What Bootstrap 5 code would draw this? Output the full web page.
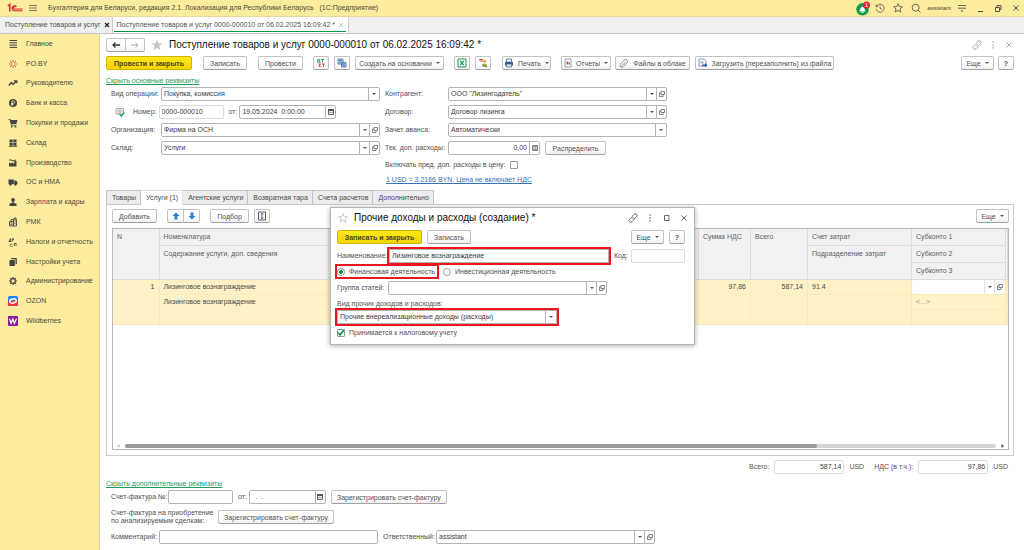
<!DOCTYPE html>
<html lang="ru">
<head>
<meta charset="utf-8">
<meta name="viewport" content="width=device-width, initial-scale=1">
<title>Поступление товаров и услуг</title>
<link href="https://cdn.jsdelivr.net/npm/bootstrap@5.3.0/dist/css/bootstrap.min.css" rel="stylesheet">
<style>
:root{--edge:#b4b4b4;--soft:#dedede;--yellow:#fbec9e;--green:#009646}
body{font:7px/10px "Liberation Sans",Arial,sans-serif;color:#505050;background:#fff;min-height:100vh}
svg{display:block;flex:none}
.ico{width:10px;height:10px}
a{color:inherit}
label{white-space:nowrap}
.topbar{background:var(--yellow);height:17px;border-bottom:1px solid #e4d9a0;padding:0 3px 0 7px;color:#4d4a3c}
.topbar .btn,.plain{padding:0;border:0;line-height:1;font-size:7px;color:inherit;background:none}
.user-name{font-size:6px;margin:0 -2px}
.tabbar{background:#f0f0f0;height:17px;border-bottom:1px solid #c4c4c4}
.wintab{padding:0 1px 0 5px;gap:2px;border-right:1px solid #cfcfcf;text-decoration:none;height:16px}
.wintab.current{background:#fff;position:relative;padding:0 3px 0 4px}
.wintab.current::after{content:"";position:absolute;left:1px;right:2px;bottom:1px;height:1px;background:var(--green)}
.sidebar{width:100px;background:var(--yellow);border-right:1px solid #ddd5a6}
.sections{height:297px}
.sections a{display:flex;align-items:center;gap:8px;padding-left:8px;text-decoration:none;flex:1;color:#4f4a38}
.workspace{padding:4px 10px 4px 6px;min-width:0}
.cmd{--bs-btn-color:#505050;--bs-btn-hover-color:#333;--bs-btn-hover-bg:#eee;--bs-btn-hover-border-color:#aaa;height:14px;padding:0 10px;font-size:7px;line-height:11px;border:1px solid #c2c2c2;border-bottom-color:#a2a2a2;border-radius:2px;background:linear-gradient(#fff 50%,#f0f0f0);display:inline-flex;align-items:center;justify-content:center;gap:4px;white-space:nowrap;flex:none}
.cmd.main-cmd{background:linear-gradient(#ffe81c,#f3d500);border-color:#d0b300;color:#4a4525;font-weight:bold;padding:0 7px}
.cmd.icon-cmd{width:16px;padding:0}
.cmd.more{width:33px;padding:0}
.caret{width:0;height:0;border:2px solid transparent;border-top-color:#555;border-bottom:0}
h1,h2{font-size:10px;line-height:14px;font-weight:400;color:#111;margin:0;white-space:nowrap}
.form-control,.form-select{height:14px;min-height:0;padding:0 2px 1px;font-size:7px;line-height:10px;color:#3c3c3c;border:1px solid var(--edge);border-radius:2px;background-color:#fff}
.form-select{line-height:12px;background-image:linear-gradient(var(--edge),var(--edge)),url("data:image/svg+xml,%3Csvg xmlns='http://www.w3.org/2000/svg' viewBox='0 0 4 2'%3E%3Cpath d='M0 0h4L2 2z' fill='%23555'/%3E%3C/svg%3E");background-size:1px 100%,4px 2px;background-position:right 10px center,right 3px center;padding:0 12px 0 2px}
.input-group{height:14px;flex-wrap:nowrap}
.input-group .btn{height:14px;width:11px;padding:0;border:1px solid var(--edge);border-radius:2px;display:flex;align-items:center;justify-content:center;background:#fff}
.mid{width:219px}
.readonly{border-color:var(--soft)}
.caption{width:50px;flex:none}
.caption2{width:63px;flex:none}
.toggle-link{color:#1f9d5c;line-height:10px}
.form-check-input{width:8px;height:8px;margin:0;border:1px solid #a0a0a0;float:none;flex:none}
.form-check-input[type=checkbox]{border-radius:1px}
.form-check-input:checked{background-color:#fff;border-color:#999}
.form-check-input:checked[type=radio]{background-image:radial-gradient(circle,var(--green) 0 2px,transparent 2px)}
.form-check-input:checked[type=checkbox]{background-size:8px 8px;background-image:url("data:image/svg+xml,%3Csvg xmlns='http://www.w3.org/2000/svg' viewBox='0 0 8 8'%3E%3Cpath d='M1 3.5 3 6l4-5' fill='none' stroke='%23009646' stroke-width='1.7'/%3E%3C/svg%3E")}
.pages{border:0;padding-left:0}
.pages .nav-link{height:14px;padding:0 4px 0 5px;line-height:13px;background:#ececec;border:1px solid #c4c4c4;border-left-width:0;border-bottom:0;border-radius:0;color:#4a4a4a;margin:0}
.pages .nav-item:first-child .nav-link{border-left-width:1px}
.pages .nav-link.active{background:#fff;margin-bottom:-1px;height:15px;color:#4a4a4a;position:relative}
.page-body{border:1px solid #ccc;padding:4px 4px 5px 5px}
.grid-box{border:1px solid #b8b8b8;height:222px;margin-top:5px}
.lines{table-layout:fixed;width:100%;border-collapse:collapse;color:#4a4a4a}
.lines th,.lines td{height:15px;padding:0 4px;font-weight:400;vertical-align:middle;border:1px solid #f8e9b8}
.lines th{height:17px;background:#f1f1f1;border-color:#dcdcdc;color:#606060;vertical-align:top;padding-top:3px}
.lines thead tr:first-child th{border-top:0;height:16px}
.lines td{background:#fff1c6}
.lines tr>:first-child{border-left:0}
.lines .num{text-align:right;padding-right:4px}
.lines td.top{vertical-align:top;padding-top:2px}
.track{height:4px;background:#d4d4d4;border-radius:2px}
.thumb{height:4px;background:#989898;border-radius:2px}
.dialog{position:absolute;left:230px;top:173px;width:365px;height:138px;border:1px solid #b5b5b5;background:#fff;box-shadow:0 1px 5px #0005;padding:3px 9px 0 6px;z-index:5}
.marked{outline:2px solid #e8191f;border-radius:0}
</style>
</head>
<body class="d-flex flex-column">
<svg width="0" height="0" class="position-absolute">
<symbol id="open" viewBox="0 0 8 8"><path d="M3 1.500h3.500v3H3zM3 3H1.500v3.500H5V4.500" fill="none" stroke="#666" stroke-width=".8"/></symbol>
<symbol id="cal" viewBox="0 0 8 8"><path d="M1.500 1.500h5v5h-5z" fill="#eee" stroke="#555" stroke-width=".9"/><path d="M1 1h6v2H1z" fill="#555"/><path d="M2 4.500h4" stroke="#888" stroke-width=".6"/></symbol>
<symbol id="calc" viewBox="0 0 8 8"><path d="M1.500 1.500h5v5h-5z" fill="#ddd" stroke="#666" stroke-width=".8"/><path d="M2 2.500h4M2.500 4.200h3M2.500 5.500h3" stroke="#777" stroke-width=".7"/></symbol>
<symbol id="chain" viewBox="0 0 10 10"><g fill="none" stroke="currentColor" stroke-width=".9"><path d="M4.500 2.800 6 1.300a1.700 1.700 0 0 1 2.500 2.500L6.700 5.600a1.600 1.600 0 0 1-2.300 0"/><path d="M5.500 7.200 4 8.700a1.700 1.700 0 0 1-2.500-2.500l1.800-1.800a1.600 1.600 0 0 1 2.300 0"/></g></symbol>
<symbol id="dots" viewBox="0 0 10 10"><path d="M4.400 1.500h1.300v1.300H4.400zM4.400 4.400h1.300v1.300H4.400zM4.400 7.300h1.300v1.300H4.400z" fill="currentColor"/></symbol>
<symbol id="cross" viewBox="0 0 10 10"><path d="m2.500 2.500 5 5m0-5-5 5" stroke="currentColor" stroke-width=".9"/></symbol>
<symbol id="star" viewBox="0 0 12 12"><path d="m6 .8 1.500 3.500 3.800.3-2.900 2.500.9 3.800L6 8.900l-3.300 2 .9-3.800L.7 4.600l3.800-.3z"/></symbol>
</svg>

<header class="topbar d-flex align-items-center">
  <svg width="16" height="10" viewBox="0 0 16 10" fill="none" stroke="#d8262c"><path d="m.8 3 2-1.500V8.500" stroke-width="1.500"/><path d="M9.500 3.700A2.500 2.500 0 1 0 7.200 7.700H15.500M8.300 4.300A1.100 1.100 0 1 0 7.200 6H15.500" stroke-width="1.100"/></svg>
  <button class="btn" style="margin-left:5px" aria-label="Меню"><svg width="10" height="10" viewBox="0 0 10 10" stroke="#6b6650"><path d="M1 2.500h8M1 5h8M1 7.500h8" stroke-width=".9"/></svg></button>
  <span class="text-nowrap" style="margin-left:10px">Бухгалтерия для Беларуси, редакция 2.1. Локализация для Республики Беларусь &nbsp; (1С:Предприятие)</span>
  <div class="d-flex align-items-center gap-2 ms-auto">
    <button class="btn" style="margin-right:-3px" aria-label="Уведомления"><svg width="14" height="15" viewBox="0 0 14 15"><circle cx="6.500" cy="8.300" r="6.200" fill="#0a9a4a"/><path d="M3 10.500c1.500-1 1-4 3.500-5 2.500 1 2 4 3.500 5zM5.500 11h2v1h-2z" fill="#fff"/><circle cx="10.500" cy="4" r="3.500" fill="#e6262b"/><text x="9" y="6.300" font-size="6" fill="#fff">1</text></svg></button>
    <button class="btn" aria-label="История"><svg class="ico" viewBox="0 0 10 10" fill="none" stroke="#555" stroke-width=".8"><path d="M1.500 3.500a4 4 0 1 1-.3 2.500M1 1.500v2.200h2.200M5 2.800V5.300l2 1"/></svg></button>
    <button class="btn" aria-label="Избранное"><svg class="ico" fill="none" stroke="#555"><use href="#star"/></svg></button>
    <button class="btn" aria-label="Поиск"><svg class="ico" viewBox="0 0 10 10" fill="none" stroke="#555" stroke-width=".9"><circle cx="4.700" cy="4.700" r="3.500"/><path d="m7.200 7.200 2.300 2.300"/></svg></button>
    <span class="user-name">assistant</span>
    <button class="btn" aria-label="Настройки"><svg class="ico" viewBox="0 0 10 10" stroke="#555" stroke-width=".9"><path d="M1 2.500h8M1 5.200h8"/><path d="M3.500 7.500h3L5 9z" fill="#555" stroke="none"/></svg></button>
    <button class="btn" aria-label="Свернуть"><svg class="ico" viewBox="0 0 10 10" stroke="#444"><path d="M3 8.500h5"/></svg></button>
    <button class="btn" aria-label="Окно"><svg class="ico" viewBox="0 0 10 10" fill="none" stroke="#444" stroke-width=".9"><path d="M2.500 4.500h4v4h-4zM4 4.500V2.500h4v4H6.500"/></svg></button>
    <button class="btn" aria-label="Закрыть"><svg class="ico" viewBox="0 0 10 10" stroke="#444" stroke-width=".9"><path d="m2.500 2.500 5 5m0-5-5 5"/></svg></button>
  </div>
</header>

<nav class="tabbar d-flex">
  <a href="#" class="wintab d-flex align-items-center">Поступление товаров и услуг <svg width="8" height="8" viewBox="0 0 10 10"><path d="m2.500 2.500 5 5m0-5-5 5" stroke="#222" stroke-width="1.500"/></svg></a>
  <a href="#" class="wintab current d-flex align-items-center">Поступление товаров и услуг 0000-000010 от 06.02.2025 16:09:42 * <svg width="8" height="8" color="#aaa"><use href="#cross"/></svg></a>
</nav>

<div class="d-flex flex-grow-1">
<aside class="sidebar flex-shrink-0">
<nav class="sections d-flex flex-column" aria-label="Разделы">
  <a href="#"><svg class="ico" viewBox="0 0 10 10" stroke="#444"><path d="M1.500 1.500h7.500M1.500 3.800h7.500M1.500 6.100h7.500M1.500 8.400h7.500"/></svg>Главное</a>
  <a href="#"><svg class="ico" viewBox="0 0 10 10" stroke="#e8483c" stroke-width=".9"><path d="M5 1v2.500M5 9V6.500M1 5h2.500M6.500 5H9M2 2l2 2M8 2 6.200 3.800M2 8l2-2M8 8 6.200 6.200"/></svg>PO.BY</a>
  <a href="#"><svg class="ico" viewBox="0 0 10 10" fill="none" stroke="#444" stroke-width="1.300"><path d="m.8 7.500 2.500-3 2 1.800L8.500 3M5.800 2.800h3v2.500"/></svg>Руководителю</a>
  <a href="#"><svg class="ico" viewBox="0 0 10 10"><circle cx="5" cy="5" r="4" fill="#444"/><path d="M4 8V2.800h1.500a1.300 1.300 0 0 1 0 2.700H3M3 6.700h2.500" stroke="#fbec9e" stroke-width=".8" fill="none"/></svg>Банк и касса</a>
  <a href="#"><svg class="ico" viewBox="0 0 10 10" fill="#444"><path d="M.5 1h1.800l.4 1H9.500L8.300 6H3.500l.2.700h4.800v.8H3L1.700 1.800H.5z"/><circle cx="3.800" cy="8.700" r=".9"/><circle cx="7.500" cy="8.700" r=".9"/></svg>Покупки и продажи</a>
  <a href="#"><svg class="ico" viewBox="0 0 10 10" fill="#444"><path d="M1.500 1.500h3.200v3H1.500zM5.300 1.500h3.200v3H5.300zM1.500 5.100h3.200v2.700H1.500zM5.300 5.100h3.200v2.700H5.300zM.8 8.200h8.500v.8H.8z"/></svg>Склад</a>
  <a href="#"><svg class="ico" viewBox="0 0 10 10" fill="#444"><path d="M1 8.500V4.500l2.500 1.300V4.300L6 5.800 6.500 3h2v5.500zM1 1.500h2l2 1 3-1v1L5 3.500l-2-1H1z"/></svg>Производство</a>
  <a href="#"><svg class="ico" viewBox="0 0 10 10" fill="#444"><path d="M.5 2.500h5.300v4.800H.5zM6.200 3.500h2l1.300 1.800v2H6.200z"/><circle cx="2.500" cy="7.700" r="1.100"/><circle cx="7.500" cy="7.700" r="1.100"/></svg>ОС и НМА</a>
  <a href="#"><svg class="ico" viewBox="0 0 10 10" fill="#444"><circle cx="5" cy="3" r="1.900"/><path d="M4.200 4.500h1.600v1.300l2.700 1V9h-7V6.800l2.700-1z"/></svg>Зарплата и кадры</a>
  <a href="#"><svg class="ico" viewBox="0 0 10 10" fill="none" stroke="#444" stroke-width=".9"><path d="M1.500 4.500h4v4.500h-4zM5.500 3h3v6h-3zM3 4.500v-2h2.500M6 3V1h2v2M2.500 6h2M2.500 7.500h2M6.500 5h1.300M6.500 6.800h1.300"/></svg>РМК</a>
  <a href="#"><svg class="ico" viewBox="0 0 10 10" fill="none" stroke="#444" stroke-width=".8"><path d="M1 4.500 2.500 1.500v3M.7 4.500h2.800M4.200 4.500V1.700h1.300v1.300H4.200M4.500 7.500a1.300 1.300 0 1 0 .1 1.500M6.500 9V6.500M6 6.500h2.300M8 9V6.500"/></svg>Налоги и отчетность</a>
  <a href="#"><svg class="ico" viewBox="0 0 10 10" fill="#444"><path d="M1.500 3h5.300v6H1.500z"/><path d="M3 2.300 3.500 1h5.300v6L7.500 7.600V2.300z"/></svg>Настройки учета</a>
  <a href="#"><svg class="ico" viewBox="0 0 10 10" fill="none" stroke="#444"><circle cx="5" cy="5" r="2.300" stroke-width="1.300"/><path d="M5 1v1.500M5 7.500V9M1 5h1.500M7.500 5H9M2.200 2.200l1 1M6.800 6.800l1 1M7.800 2.200l-1 1M3.200 6.800l-1 1" stroke-width="1.200"/></svg>Администрирование</a>
  <a href="#"><svg class="ico" viewBox="0 0 10 10"><rect width="10" height="10" rx="1.500" fill="#2380f0"/><path d="M0 5.500 10 4v4.500A1.500 1.500 0 0 1 8.500 10h-7A1.500 1.500 0 0 1 0 8.500z" fill="#ee3040"/><ellipse cx="5" cy="5" rx="3.300" ry="2.100" fill="none" stroke="#fff" stroke-width="1.500" transform="rotate(-12 5 5)"/></svg>OZON</a>
  <a href="#"><svg class="ico" viewBox="0 0 10 10"><rect width="10" height="10" rx="1" fill="#8b1b96"/><path d="m1.500 2.800 1.600 4.500L4.800 3l1.600 4.300L8.500 2.500" fill="none" stroke="#fff" stroke-width="1.200"/></svg>Wildberries</a>
</nav>
</aside>

<main class="workspace flex-grow-1 position-relative">
  <div class="d-flex align-items-center">
    <div class="btn-group">
      <button class="btn cmd px-0" style="width:20px" aria-label="Назад"><svg class="ico" viewBox="0 0 10 10" fill="none" stroke="#333" stroke-width="1.300"><path d="M9 5H2M4.500 2.500 2 5l2.500 2.500"/></svg></button>
      <button class="btn cmd px-0" style="width:20px" aria-label="Вперед"><svg class="ico" viewBox="0 0 10 10" fill="none" stroke="#aaa"><path d="M1 5h7M5.500 2.500 8 5 5.500 7.500"/></svg></button>
    </div>
    <svg width="12" height="12" fill="#c6c6c6" style="margin:0 6px"><use href="#star"/></svg>
    <h1>Поступление товаров и услуг 0000-000010 от 06.02.2025 16:09:42 *</h1>
    <div class="d-flex ms-auto" style="gap:6px;color:#9a9a9a">
      <button class="btn plain" aria-label="Ссылка"><svg class="ico"><use href="#chain"/></svg></button>
      <button class="btn plain" aria-label="Меню окна"><svg class="ico"><use href="#dots"/></svg></button>
      <button class="btn plain" aria-label="Закрыть"><svg class="ico"><use href="#cross"/></svg></button>
    </div>
  </div>

  <div class="d-flex align-items-center mt-1">
    <button class="btn cmd main-cmd" style="width:86px">Провести и закрыть</button>
    <button class="btn cmd" style="width:44px;margin-left:11px">Записать</button>
    <button class="btn cmd" style="width:45px;margin-left:11px">Провести</button>
    <button class="btn cmd icon-cmd" style="margin-left:10px" aria-label="Дт Кт"><svg class="ico" viewBox="0 0 10 10" fill="none" stroke-width=".9"><path d="M1 4.300h3.500M1.700 4V1.500h2V4M5 1.500h3M6.500 1.500v3" stroke="#1d9c57"/><path d="M3.300 5.500v3.500M5.300 5.500l-2 1.700 2 1.800M6 6h3M7.500 6v3" stroke="#df3c3c"/></svg></button>
    <button class="btn cmd icon-cmd" style="margin-left:5px" aria-label="Структура"><svg class="ico" viewBox="0 0 10 10" fill="none" stroke="#4b78b0" stroke-width=".9"><path d="M1 1h5v5H1zM4.500 4.500h4.500v4.500H4.500z" fill="#b9d0ea"/><path d="M2 2.500h3M2 4h2M5.500 6h2.500M5.500 7.500h2.500"/></svg></button>
    <button class="btn cmd p-0" style="width:89px;margin-left:5px">Создать на основании <i class="caret"></i></button>
    <button class="btn cmd icon-cmd" style="margin-left:10px" aria-label="Excel"><svg class="ico" viewBox="0 0 10 10" fill="none" stroke="#169b50"><path d="M1 1h8v8H1z"/><path d="m3.200 2.800 3.600 4.400m0-4.400L3.200 7.200" stroke-width="1.300"/></svg></button>
    <button class="btn cmd icon-cmd" style="margin-left:5px" aria-label="Подбор"><svg class="ico" viewBox="0 0 10 10"><path d="M1 1.500h4M1.500 3h3" stroke="#d24d3d"/><path d="M5 4.500a1.800 1.800 0 1 1 3 0M3.500 8.500l2-3 3.500.5V9z" fill="#d9a53b"/><path d="M4.500 6.500 8.500 9" stroke="#2c9a5c" stroke-width="1.300"/></svg></button>
    <button class="btn cmd p-0" style="width:49px;margin-left:11px"><svg class="ico" viewBox="0 0 10 10"><path d="M2.500 1h5v3h-5z" fill="#fff" stroke="#3b5f8d" stroke-width=".8"/><path d="M1 4h8v3.500H1z" fill="#3b5f8d"/><path d="M2.500 6h5v3h-5z" fill="#dce8f5" stroke="#3b5f8d" stroke-width=".7"/></svg>Печать <i class="caret"></i></button>
    <button class="btn cmd p-0" style="width:50px;margin-left:10px"><svg width="8" height="10" viewBox="0 0 8 10"><path d="M1 1h6v8H1z" fill="#fff" stroke="#7c8da3" stroke-width=".8"/><path d="M2.500 3.500h2v3h-2z" fill="#d9413a"/><path d="M5 4.500h1v2H5z" fill="#2f9c55"/></svg>Отчеты <i class="caret"></i></button>
    <button class="btn cmd p-0 ms-1" style="width:75px"><svg class="ico" viewBox="0 0 10 10" fill="none" stroke="#888"><path d="M3 7.500 7 3.500M1.500 6 5 2.200a2 2 0 0 1 3.200 2.500L4.500 8.500A1.700 1.700 0 0 1 1.500 6.500"/></svg>Файлы в облаке</button>
    <button class="btn cmd p-0" style="width:139px;margin-left:5px"><svg class="ico" viewBox="0 0 10 10"><path d="M1 1h5l2 2v5H1z" fill="#fff" stroke="#6f89a8" stroke-width=".8"/><path d="M2.500 3.500h3v2h-3z" fill="#8eb0d4"/><path d="M4 6.500h3V5l2.500 2.300L7 9.500V8H4z" fill="#2660a4"/></svg>Загрузить (перезаполнить) из файла</button>
    <button class="btn cmd more ms-auto">Еще <i class="caret"></i></button>
    <button class="btn cmd icon-cmd ms-1 fw-bold">?</button>
  </div>

  <a href="#" class="toggle-link d-inline-block" style="margin-top:6px">Скрыть основные реквизиты</a>

  <div class="d-flex" style="gap:5px;padding-left:5px;margin-top:1px">
    <div class="d-flex flex-column gap-1">
      <div class="d-flex align-items-center"><label class="caption" for="op">Вид операции:</label><select id="op" class="form-select mid"><option>Покупка, комиссия</option></select></div>
      <div class="d-flex align-items-center" style="gap:2px">
        <svg width="20" height="10" viewBox="0 0 20 10" fill="none"><path d="M5 1.500h7.500v5.500H5z" fill="#eee" stroke="#999" stroke-width=".8"/><path d="M6.500 3.300h4.500M6.500 5h4.500" stroke="#999" stroke-width=".7"/><path d="m8.500 7 1.800 2 3-3.500" stroke="#1ea352" stroke-width="1.400"/></svg>
        <label for="no">Номер:</label><input id="no" class="form-control readonly" style="width:65px" value="0000-000010" readonly>
        <label for="dt" style="margin-left:3px">от:</label>
        <div class="input-group" style="width:97px"><input id="dt" class="form-control" value="19.05.2024  0:00:00"><button class="btn" aria-label="Календарь"><svg width="8" height="8"><use href="#cal"/></svg></button></div>
      </div>
      <div class="d-flex align-items-center"><label class="caption" for="org">Организация:</label><div class="input-group mid"><input id="org" class="form-control" value="Фирма на ОСН"><button class="btn" aria-label="Выбрать"><i class="caret"></i></button><button class="btn" aria-label="Открыть"><svg width="8" height="8"><use href="#open"/></svg></button></div></div>
      <div class="d-flex align-items-center"><label class="caption" for="wh">Склад:</label><div class="input-group mid"><input id="wh" class="form-control" value="Услуги"><button class="btn" aria-label="Выбрать"><i class="caret"></i></button><button class="btn" aria-label="Открыть"><svg width="8" height="8"><use href="#open"/></svg></button></div></div>
    </div>
    <div class="d-flex flex-column gap-1">
      <div class="d-flex align-items-center"><label class="caption2" for="ca">Контрагент:</label><div class="input-group mid"><input id="ca" class="form-control" value="ООО &quot;Лизингодатель&quot;"><button class="btn" aria-label="Выбрать"><i class="caret"></i></button><button class="btn" aria-label="Открыть"><svg width="8" height="8"><use href="#open"/></svg></button></div></div>
      <div class="d-flex align-items-center"><label class="caption2" for="dg">Договор:</label><div class="input-group mid"><input id="dg" class="form-control" value="Договор лизинга"><button class="btn" aria-label="Выбрать"><i class="caret"></i></button><button class="btn" aria-label="Открыть"><svg width="8" height="8"><use href="#open"/></svg></button></div></div>
      <div class="d-flex align-items-center"><label class="caption2" for="av">Зачет аванса:</label><select id="av" class="form-select mid"><option>Автоматически</option></select></div>
      <div class="d-flex align-items-center"><label class="caption2" for="ex">Тек. доп. расходы:</label><div class="input-group" style="width:92px"><input id="ex" class="form-control text-end" value="0,00"><button class="btn" aria-label="Калькулятор"><svg width="8" height="8"><use href="#calc"/></svg></button></div><button class="btn cmd p-0" style="width:61px;margin-left:5px">Распределить</button></div>
      <div class="d-flex align-items-center" style="gap:4px;height:12px"><label for="inc">Включать пред. доп. расходы в цену:</label><input type="checkbox" id="inc" class="form-check-input"></div>
      <a href="#" style="color:#3273b8;padding-left:1px;line-height:10px">1 USD = 3.2166 BYN. Цена не включает НДС</a>
    </div>
  </div>

  <ul class="nav nav-tabs pages" style="margin-top:5px">
    <li class="nav-item"><a class="nav-link" href="#">Товары</a></li>
    <li class="nav-item"><a class="nav-link active" href="#">Услуги (1)</a></li>
    <li class="nav-item"><a class="nav-link" href="#">Агентские услуги</a></li>
    <li class="nav-item"><a class="nav-link" href="#">Возвратная тара</a></li>
    <li class="nav-item"><a class="nav-link" href="#">Счета расчетов</a></li>
    <li class="nav-item"><a class="nav-link" href="#">Дополнительно</a></li>
  </ul>
  <section class="page-body">
    <div class="d-flex align-items-center">
      <button class="btn cmd p-0" style="width:45px">Добавить</button>
      <div class="btn-group" style="margin-left:10px">
        <button class="btn cmd icon-cmd" style="width:17px" aria-label="Вверх"><svg width="8" height="8" viewBox="0 0 8 8"><path d="m4 .5 3.500 3.500h-2v3.500h-3V4h-2z" fill="#2b7fd6"/></svg></button>
        <button class="btn cmd icon-cmd" style="width:17px" aria-label="Вниз"><svg width="8" height="8" viewBox="0 0 8 8"><path d="m4 7.500 3.500-3.500h-2V.5h-3V4h-2z" fill="#2b7fd6"/></svg></button>
      </div>
      <button class="btn cmd p-0" style="width:39px;margin-left:10px">Подбор</button>
      <button class="btn cmd icon-cmd" style="margin-left:5px" aria-label="Высота строк"><svg class="ico" viewBox="0 0 10 10" fill="none" stroke="#3d4c60" stroke-width=".9"><path d="M1.500 1h7v8h-7z"/><path d="M5 2.200v5.600M3.700 3.500 5 2.200l1.300 1.300M3.700 6.500 5 7.800l1.300-1.300"/></svg></button>
      <button class="btn cmd more ms-auto">Еще <i class="caret"></i></button>
    </div>
    <div class="grid-box d-flex flex-column">
      <table class="lines">
        <colgroup><col style="width:46px"><col style="width:169px"><col><col style="width:52px"><col style="width:57px"><col style="width:104px"><col style="width:94px"><col style="width:2px"></colgroup>
        <thead>
          <tr><th rowspan="3">N</th><th>Номенклатура</th><th rowspan="3"></th><th rowspan="3" class="text-nowrap">Сумма НДС</th><th rowspan="3">Всего</th><th>Счет затрат</th><th>Субконто 1</th><th rowspan="3" class="p-0"></th></tr>
          <tr><th rowspan="2">Содержание услуги, доп. сведения</th><th rowspan="2">Подразделение затрат</th><th>Субконто 2</th></tr>
          <tr><th>Субконто 3</th></tr>
        </thead>
        <tbody>
          <tr><td rowspan="3" class="num top">1</td><td>Лизинговое вознаграждение</td><td rowspan="3"></td><td rowspan="3" class="num top">97,86</td><td rowspan="3" class="num top">587,14</td><td>91.4</td><td class="p-0"><div class="input-group"><input class="form-control border-0" aria-label="Субконто 1"><button class="btn border-0 border-start" aria-label="Выбрать"><i class="caret"></i></button><button class="btn border-0 border-start" aria-label="Открыть"><svg width="8" height="8"><use href="#open"/></svg></button></div></td><td rowspan="3" class="p-0"></td></tr>
          <tr><td rowspan="2" class="top">Лизинговое вознаграждение</td><td rowspan="2"></td><td style="color:#999">&lt;...&gt;</td></tr>
          <tr><td></td></tr>
        </tbody>
      </table>
      <div class="d-flex align-items-center mt-auto" style="gap:5px;padding:0 4px 1px">
        <svg width="3" height="4" viewBox="0 0 3 4"><path d="M2.500.5v3L.5 2z" fill="#aaa"/></svg>
        <div class="track flex-grow-1"><div class="thumb" style="width:79.500%"></div></div>
        <svg width="3" height="4" viewBox="0 0 3 4"><path d="M.5 0v4L3 2z" fill="#444"/></svg>
      </div>
    </div>
  </section>

  <div class="d-flex align-items-center justify-content-end" style="gap:5px;margin-top:4px;padding-right:6px">
    <label for="tot">Всего:</label><input id="tot" class="form-control readonly text-end" style="width:70px" value="587,14" readonly><span>USD</span>
    <label for="vat" style="margin-left:5px">НДС (в т.ч.):</label><input id="vat" class="form-control readonly text-end" style="width:70px" value="97,86" readonly><span>USD</span>
  </div>

  <a href="#" class="toggle-link d-inline-block" style="margin-top:5px">Скрыть дополнительные реквизиты</a>
  <div class="d-flex flex-column" style="padding-left:5px;margin-top:1px;gap:5px">
    <div class="d-flex align-items-center" style="gap:5px">
      <label for="sf" style="width:52px">Счет-фактура №:</label><input id="sf" class="form-control" style="width:65px">
      <div class="d-flex align-items-center" style="gap:2px"><label for="sfd">от:</label><div class="input-group" style="width:77px"><input id="sfd" class="form-control" value="  .  ."><button class="btn" aria-label="Календарь"><svg width="8" height="8"><use href="#cal"/></svg></button></div></div>
      <button class="btn cmd p-0" style="width:116px">Зарегистрировать счет-фактуру</button>
    </div>
    <div class="d-flex align-items-center">
      <span style="width:107px;line-height:8px">Счет-фактура на приобретение<br>по анализируемым сделкам:</span>
      <button class="btn cmd p-0" style="width:116px">Зарегистрировать счет-фактуру</button>
    </div>
    <div class="d-flex align-items-center">
      <label for="cm" style="width:48px">Комментарий:</label><input id="cm" class="form-control mid">
      <label for="rs" style="width:53px;margin-left:5px">Ответственный:</label><div class="input-group mid"><input id="rs" class="form-control" value="assistant"><button class="btn" aria-label="Выбрать"><i class="caret"></i></button><button class="btn" aria-label="Открыть"><svg width="8" height="8"><use href="#open"/></svg></button></div>
    </div>
  </div>

  <div class="dialog" role="dialog" aria-labelledby="dlg">
    <div class="d-flex align-items-center">
      <svg class="ico" fill="none" stroke="#bbb" style="margin:0 6px 0 1px"><use href="#star"/></svg>
      <h2 id="dlg">Прочие доходы и расходы (создание) *</h2>
      <div class="d-flex ms-auto" style="gap:7px;color:#555;margin-right:-4px">
        <button class="btn plain" aria-label="Ссылка"><svg class="ico"><use href="#chain"/></svg></button>
        <button class="btn plain" aria-label="Меню окна"><svg class="ico"><use href="#dots"/></svg></button>
        <button class="btn plain" aria-label="Развернуть"><svg class="ico" viewBox="0 0 10 10"><path d="M2.500 2.500h4.500v5H2.500z" fill="none" stroke="#555" stroke-width=".9"/></svg></button>
        <button class="btn plain" aria-label="Закрыть"><svg class="ico"><use href="#cross"/></svg></button>
      </div>
    </div>
    <div class="d-flex" style="gap:5px;margin-top:5px">
      <button class="btn cmd main-cmd" style="width:85px">Записать и закрыть</button>
      <button class="btn cmd p-0" style="width:44px">Записать</button>
      <button class="btn cmd more ms-auto">Еще <i class="caret"></i></button>
      <button class="btn cmd icon-cmd fw-bold">?</button>
    </div>
    <div class="d-flex align-items-center" style="margin-top:5px">
      <label for="nm" style="width:52px">Наименование:</label><input id="nm" class="form-control marked" style="width:220px" value="Лизинговое вознаграждение">
      <label for="cd" class="ms-auto" style="width:17px">Код:</label><input id="cd" class="form-control readonly" style="width:54px">
    </div>
    <div class="d-flex align-items-center" style="margin-top:3px;gap:6px">
      <div class="d-flex align-items-center marked" style="gap:4px;height:11px;width:100px"><input type="radio" class="form-check-input" name="act" id="fin" checked><label for="fin">Финансовая деятельность</label></div>
      <div class="d-flex align-items-center" style="gap:4px"><input type="radio" class="form-check-input" name="act" id="inv"><label for="inv">Инвестиционная деятельность</label></div>
    </div>
    <div class="d-flex align-items-center" style="margin-top:4px"><label for="gr" style="width:51px">Группа статей:</label><div class="input-group mid"><input id="gr" class="form-control"><button class="btn" aria-label="Выбрать"><i class="caret"></i></button><button class="btn" aria-label="Открыть"><svg width="8" height="8"><use href="#open"/></svg></button></div></div>
    <label for="kd" class="d-block" style="margin-top:4px">Вид прочих доходов и расходов:</label>
    <select id="kd" class="form-select marked" style="width:220px;margin-top:1px"><option>Прочие внереализационные доходы (расходы)</option></select>
    <div class="d-flex align-items-center" style="gap:4px;margin-top:4px"><input type="checkbox" id="tx" class="form-check-input" checked><label for="tx">Принимается к налоговому учету</label></div>
  </div>
</main>
</div>
<script src="https://cdn.jsdelivr.net/npm/bootstrap@5.3.0/dist/js/bootstrap.bundle.min.js"></script>
</body>
</html>
